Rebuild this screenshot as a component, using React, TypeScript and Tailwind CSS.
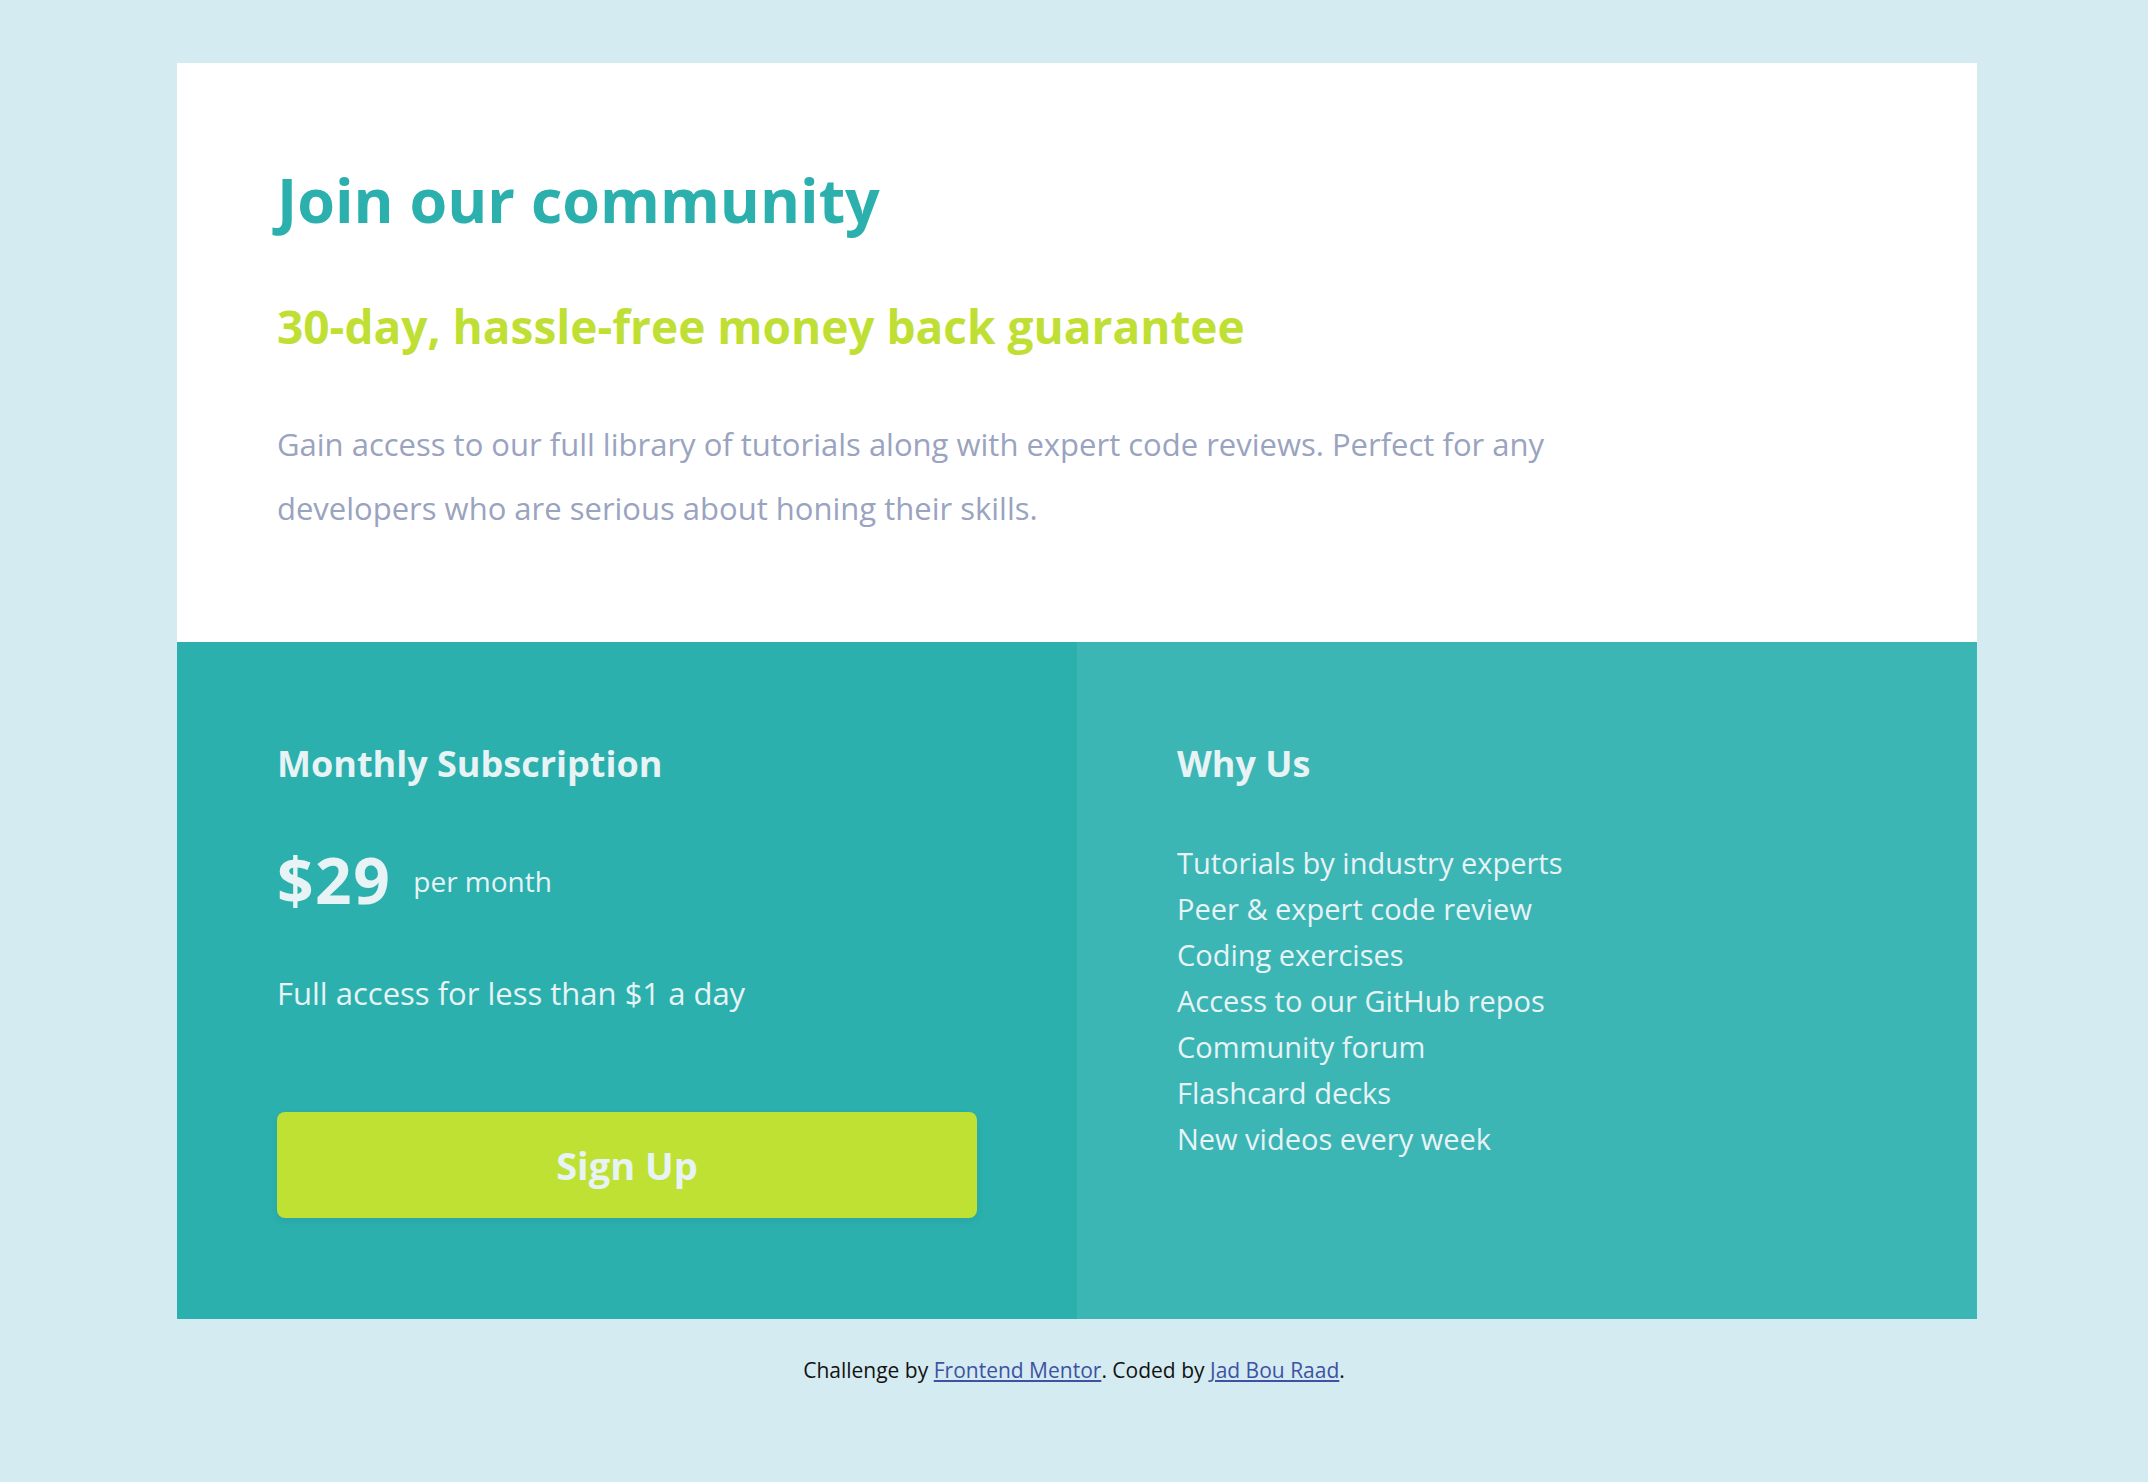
import React from "react";

export default function App() {
  const items = [
    "Tutorials by industry experts",
    "Peer & expert code review",
    "Coding exercises",
    "Access to our GitHub repos",
    "Community forum",
    "Flashcard decks",
    "New videos every week",
  ];
  return (
    <div
      className="min-h-screen w-full bg-[#d4ebf1] pt-[63px] pb-[80px]"
      style={{ fontFamily: '"Open Sans", "Noto Sans", sans-serif' }}
    >
      <main className="ml-[177px] w-[1800px]">
        <section className="bg-white h-[579px] pl-[100px] pt-[97px]">
          <h1 className="text-[61px] leading-[80px] font-bold text-[#2bb0ae]">
            Join our community
          </h1>
          <h2 className="mt-[58px] text-[46px] leading-[56px] font-bold text-[#c0df34]">
            30-day, hassle-free money back guarantee
          </h2>
          <p className="mt-[58px] w-[1340px] text-[31px] leading-[64px] text-[#9aa3bf]">
            Gain access to our full library of tutorials along with expert code reviews. Perfect for any developers who are serious about honing their skills.
          </p>
        </section>
        <section className="grid grid-cols-2 h-[677px]">
          <div className="bg-[#2bb0ae] pl-[100px] pt-[98px] text-[#e7f3f5]">
            <h3 className="text-[36px] leading-[48px] font-bold">Monthly Subscription</h3>
            <div className="mt-[60px] flex items-center gap-[22px]">
              <span className="text-[64px] leading-[64px] font-bold tracking-[1.5px]">$29</span>
              <span className="text-[28px] leading-[40px] pt-[2px]">per month</span>
            </div>
            <p className="mt-[59px] text-[31px] leading-[44px]">Full access for less than $1 a day</p>
            <button className="mt-[97px] w-[700px] h-[106px] rounded-[8px] bg-[#bfe133] text-[38px] font-bold text-[#e7f3f5] shadow-[0_4px_8px_rgba(0,0,0,0.06)]">
              Sign Up
            </button>
          </div>
          <div className="bg-[#3cb5b5] pl-[100px] pt-[98px] text-[#e7f3f5]">
            <h3 className="text-[36px] leading-[48px] font-bold">Why Us</h3>
            <ul className="mt-[52px] flex flex-col">
              {items.map((t) => (
                <li key={t} className="text-[29px] leading-[46px]">
                  {t}
                </li>
              ))}
            </ul>
          </div>
        </section>
      </main>
      <footer className="mt-[36px] text-center text-[21px] leading-[30px] text-[#121212]">
        Challenge by{" "}
        <a href="#" className="text-[#3e52a3] underline">
          Frontend Mentor
        </a>
        . Coded by{" "}
        <a href="#" className="text-[#3e52a3] underline">
          Jad Bou Raad
        </a>
        .
      </footer>
    </div>
  );
}
